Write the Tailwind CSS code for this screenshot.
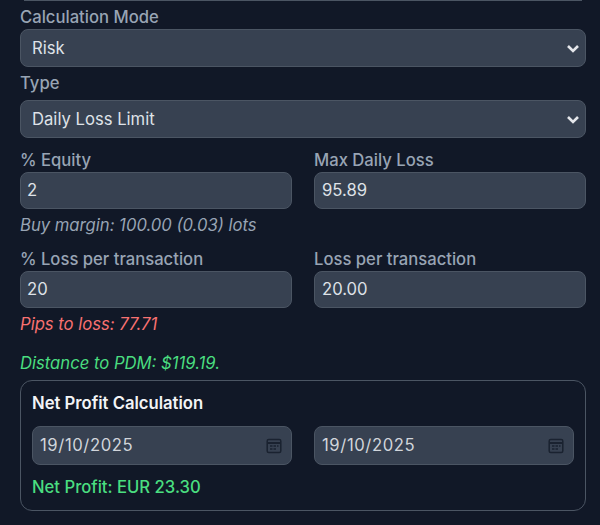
<!DOCTYPE html>
<html lang="en">
<head>
    <meta charset="UTF-8">
    <meta name="viewport" content="width=device-width, initial-scale=1.0">
    <title>Risk Calculator</title>
    <script src="https://cdn.jsdelivr.net/npm/@tailwindcss/browser@4"></script>
</head>
<body class="bg-[#111827] font-['Inter',sans-serif] text-[16.65px] w-[600px] h-[525px] overflow-hidden">

    <div class="pl-5 pr-[14px] h-[525px] overflow-hidden">
        <!-- bottom edge of the field above -->
        <div class="h-px mx-1 bg-[#4b5563]"></div>

        <!-- Mode + type -->
        <label class="block h-[23px] mt-[5px] text-[#98a4b4] font-medium leading-[22px]">Calculation Mode</label>
        <div class="h-[38px] rounded-lg border border-[#4b5563] bg-[#374151] flex items-center justify-between pl-[11px] pr-[5px] text-[#dfe2e8]">
            <span>Risk</span>
            <svg class="w-[14px] h-[14px] text-[#e5e7eb]" viewBox="0 0 14 14" fill="none" stroke="currentColor" stroke-width="2.6"><path d="M2 5l5 5 5-5"/></svg>
        </div>
        <label class="block h-[33px] pt-[5px] text-[#98a4b4] font-medium leading-[22px]">Type</label>
        <div class="h-[38px] rounded-lg border border-[#4b5563] bg-[#374151] flex items-center justify-between pl-[11px] pr-[5px] text-[#dfe2e8]">
            <span>Daily Loss Limit</span>
            <svg class="w-[14px] h-[14px] text-[#e5e7eb]" viewBox="0 0 14 14" fill="none" stroke="currentColor" stroke-width="2.6"><path d="M2 5l5 5 5-5"/></svg>
        </div>

        <!-- Equity -->
        <div class="grid grid-cols-2 gap-x-[22px] mt-[11px]">
            <div>
                <label class="block h-[23px] text-[#98a4b4] font-medium leading-[22px]">% Equity</label>
                <div class="h-[37px] rounded-lg border border-[#4b5563] bg-[#374151] flex items-center pl-[6px] pr-[7px] text-[#dfe2e8]">2</div>
            </div>
            <div>
                <label class="block h-[23px] text-[#98a4b4] font-medium leading-[22px]">Max Daily Loss</label>
                <div class="h-[37px] rounded-lg border border-[#4b5563] bg-[#374151] flex items-center px-[7px] text-[#dfe2e8]">95.89</div>
            </div>
        </div>
        <p class="mt-[5px] h-[22px] leading-[22px] italic text-[#98a4b4]">Buy margin: 100.00 (0.03) lots</p>

        <!-- Loss per transaction -->
        <div class="grid grid-cols-2 gap-x-[22px] mt-[12px]">
            <div>
                <label class="block h-[23px] text-[#98a4b4] font-medium leading-[22px]">% Loss per transaction</label>
                <div class="h-[37px] rounded-lg border border-[#4b5563] bg-[#374151] flex items-center pl-[6px] pr-[7px] text-[#dfe2e8]">20</div>
            </div>
            <div>
                <label class="block h-[23px] text-[#98a4b4] font-medium leading-[22px]">Loss per transaction</label>
                <div class="h-[37px] rounded-lg border border-[#4b5563] bg-[#374151] flex items-center px-[7px] text-[#dfe2e8]">20.00</div>
            </div>
        </div>
        <p class="mt-[5px] h-[22px] leading-[22px] italic text-[#f87171]">Pips to loss: 77.71</p>
        <p class="mt-[17px] h-[22px] leading-[22px] italic text-[#4ade80]">Distance to PDM: $119.19.</p>

        <!-- Net profit -->
        <div class="mt-[6px] h-[131px] rounded-xl border border-[#4b5563] px-[11px] pt-[11px]">
            <h3 class="h-[22px] leading-[22px] font-semibold text-[#f3f4f6]">Net Profit Calculation</h3>
            <div class="grid grid-cols-2 gap-x-[22px] mt-[12px]">
                <div class="h-[39px] rounded-lg border border-[#4b5563] bg-[#374151] flex items-center justify-between pl-[7px] pr-[9px] text-[#d1d5db] tracking-[0.6px]">
                    <span>19/10/2025</span>
                    <svg class="w-4 h-4 text-[#1a2230]" viewBox="0 0 16 16" fill="none" stroke="currentColor" stroke-width="1.5"><rect x="1.2" y="1.5" width="13.6" height="13" rx="1.5"/><path d="M1 5h14" stroke-width="2"/><path d="M4 8h2.5M7.5 8h2.5M11 8h1.5M4 11h2.5M7.5 11h2.5" stroke-width="1.3"/></svg>
                </div>
                <div class="h-[39px] rounded-lg border border-[#4b5563] bg-[#374151] flex items-center justify-between pl-[7px] pr-[9px] text-[#d1d5db] tracking-[0.6px]">
                    <span>19/10/2025</span>
                    <svg class="w-4 h-4 text-[#1a2230]" viewBox="0 0 16 16" fill="none" stroke="currentColor" stroke-width="1.5"><rect x="1.2" y="1.5" width="13.6" height="13" rx="1.5"/><path d="M1 5h14" stroke-width="2"/><path d="M4 8h2.5M7.5 8h2.5M11 8h1.5M4 11h2.5M7.5 11h2.5" stroke-width="1.3"/></svg>
                </div>
            </div>
            <p class="mt-[11px] h-[22px] leading-[22px] font-medium text-[#4ade80]">Net Profit: EUR 23.30</p>
        </div>
    </div>

</body>
</html>
